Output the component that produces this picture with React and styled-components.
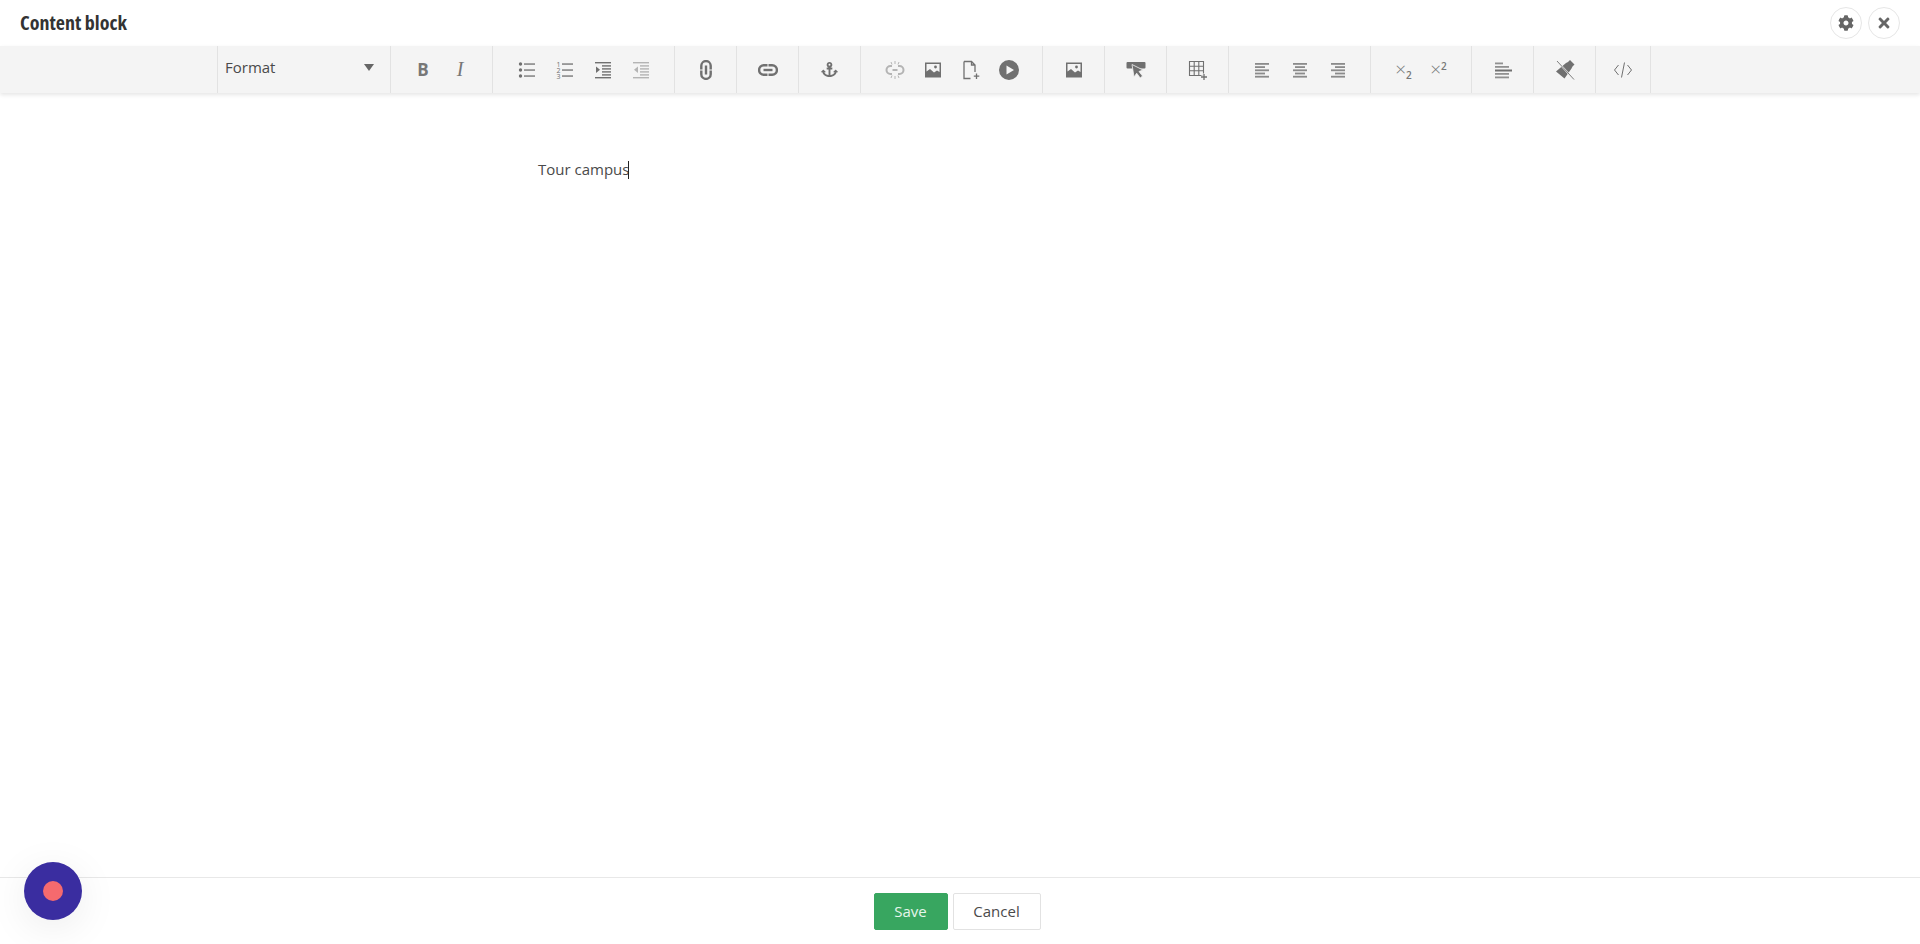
import React from 'react';
import styled, { createGlobalStyle } from 'styled-components';
import { FaAnchor, FaCog, FaTimes } from 'react-icons/fa';

const Global = createGlobalStyle`
  html, body, #root { margin: 0; padding: 0; height: 100%; }
  body {
    background: #fff;
    color: #4a4a4a;
    font-family: "Open Sans", "Liberation Sans", sans-serif;
    overflow: hidden;
  }
`;

const Page = styled.div`
  display: flex;
  flex-direction: column;
  height: 100vh;
`;

const Header = styled.header`
  display: flex;
  align-items: center;
  justify-content: space-between;
  height: 46px;
  padding: 0 20px;
  flex-shrink: 0;
`;

const Title = styled.h1`
  margin: 0 0 2px;
  font-size: 20px;
  font-weight: 700;
  font-stretch: 75%;
  color: #333;
`;

const HeaderActions = styled.div`
  display: flex;
  gap: 6px;
`;

const RoundButton = styled.button`
  display: flex;
  align-items: center;
  justify-content: center;
  width: 32px;
  height: 32px;
  padding: 0;
  background: #fff;
  border: 1px solid #e6e6e6;
  border-radius: 50%;
  color: #666;
  font-size: 16px;
`;

const Toolbar = styled.div`
  display: flex;
  height: 47px;
  padding-left: 217px;
  flex-shrink: 0;
  background: #f4f4f4;
  box-shadow: 0 2px 4px rgba(0, 0, 0, 0.1);
`;

const FormatSelect = styled.div`
  display: flex;
  align-items: center;
  justify-content: space-between;
  width: 174px;
  box-sizing: border-box;
  padding: 0 16px 5px 7px;
  border-left: 1px solid #e2e2e2;
  border-right: 1px solid #e2e2e2;
  font-size: 15px;
  color: #4a4a4a;
`;

const Caret = styled.span`
  width: 0;
  height: 0;
  border-left: 5px solid transparent;
  border-right: 5px solid transparent;
  border-top: 7px solid #666;
`;

const Group = styled.div`
  display: flex;
  align-items: center;
  justify-content: center;
  width: ${p => p.$w}px;
  box-sizing: border-box;
  border-right: 1px solid #e2e2e2;
`;

const ToolButton = styled.button`
  display: flex;
  align-items: center;
  justify-content: center;
  width: ${p => p.$size}px;
  height: 100%;
  padding: 0;
  background: none;
  border: 0;
  color: ${p => (p.$off ? '#b4b4b4' : '#707070')};
`;

const BoldGlyph = styled.span`
  font-family: "Open Sans", sans-serif;
  font-weight: 700;
  font-size: 17px;
  color: #777;
`;

const ItalicGlyph = styled.span`
  font-family: "Liberation Serif", serif;
  font-style: italic;
  font-size: 20px;
  color: #777;
`;

const ScriptGlyph = styled.span`
  font-family: "Open Sans", sans-serif;
  font-size: 19px;
  font-weight: 300;
  line-height: 1;
  color: #777;
  sub, sup { font-size: 10px; font-weight: 600; line-height: 0; }
  sub { vertical-align: -3px; }
  sup { vertical-align: 6px; }
`;

const Editor = styled.main`
  flex: 1;
  width: 844px;
  margin: 0 auto;
  padding-top: 65px;
  font-size: 15px;
  line-height: 22px;
  color: #4a4a4a;
`;

const TextCaret = styled.span`
  display: inline-block;
  width: 1px;
  height: 18px;
  margin-left: -1px;
  background: #222;
  vertical-align: -4px;
`;

const Footer = styled.footer`
  display: flex;
  align-items: center;
  justify-content: center;
  gap: 5px;
  height: 67px;
  padding-right: 6px;
  flex-shrink: 0;
  box-sizing: border-box;
  border-top: 1px solid #e8e8e8;
`;

const Button = styled.button`
  height: 37px;
  padding: 0;
  width: ${p => p.$w}px;
  border-radius: 2px;
  font-family: inherit;
  font-size: 15px;
  background: ${p => (p.$primary ? '#38a660' : '#fff')};
  color: ${p => (p.$primary ? '#e6f6ec' : '#4a4a4a')};
  border: 1px solid ${p => (p.$primary ? '#38a660' : '#e2e2e2')};
`;

const Recorder = styled.div`
  position: fixed;
  left: 24px;
  bottom: 24px;
  display: flex;
  align-items: center;
  justify-content: center;
  width: 58px;
  height: 58px;
  border-radius: 50%;
  background: #3a2da0;
  box-shadow: 0 8px 40px rgba(0, 0, 0, 0.08);
`;

const RecorderDot = styled.span`
  width: 20px;
  height: 20px;
  border-radius: 50%;
  background: #f56a6e;
`;

const Svg = ({ children }) => (
  <svg width="20" height="20" viewBox="0 0 20 20" fill="currentColor">{children}</svg>
);

const Lines = ({ rows }) => (
  <Svg>
    {rows.map(([x, y, w, h = 1.8, o = 0.8], i) => (
      <rect key={i} x={x} y={y} width={w} height={h} opacity={o} />
    ))}
  </Svg>
);

const BulletList = () => (
  <Svg>
    <circle cx="3.5" cy="4" r="1.7" />
    <circle cx="3.5" cy="10" r="1.7" />
    <circle cx="3.5" cy="16" r="1.7" />
    <rect x="7" y="3.4" width="11" height="1.3" />
    <rect x="7" y="9.4" width="11" height="1.3" />
    <rect x="7" y="15.4" width="11" height="1.3" />
  </Svg>
);

const NumberList = () => (
  <Svg>
    <text x="1.5" y="6.5" fontSize="7" fontFamily="Open Sans">1</text>
    <text x="1.5" y="12.5" fontSize="7" fontFamily="Open Sans">2</text>
    <text x="1.5" y="18.5" fontSize="7" fontFamily="Open Sans">3</text>
    <rect x="7" y="3.4" width="11" height="1.3" />
    <rect x="7" y="9.4" width="11" height="1.3" />
    <rect x="7" y="15.4" width="11" height="1.3" />
  </Svg>
);

const Indent = ({ out }) => (
  <Svg>
    <rect x="2" y="2" width="16" height="1.4" />
    <rect x="9" y="5.2" width="9" height="1.4" />
    <rect x="9" y="8.2" width="9" height="1.4" />
    <rect x="9" y="11.2" width="9" height="1.4" />
    <rect x="9" y="14.2" width="9" height="1.4" />
    <rect x="2" y="17" width="16" height="1.4" />
    {out ? <path d="M7 6.5v6.5L3 9.7z" /> : <path d="M3 6.5v6.5l4-3.3z" />}
  </Svg>
);

const linkPaths = (
  <g fill="none" stroke="currentColor" strokeWidth="2.4">
    <path d="M9.500 5.300H5.800a4.700 4.700 0 0 0 0 9.400h3.700" />
    <path d="M10.500 5.300h3.700a4.700 4.700 0 0 1 0 9.400h-3.700" />
    <path d="M5.500 10h9" />
  </g>
);

const VerticalLink = () => (
  <Svg><g transform="rotate(90 10 10)">{linkPaths}</g></Svg>
);

const HorizontalLink = () => <Svg>{linkPaths}</Svg>;

const BrokenLink = () => (
  <Svg>
    <g fill="none" stroke="currentColor" strokeWidth="2">
      <path d="M7 6H5.500a4 4 0 0 0 0 8H7M13 6h1.500a4 4 0 0 1 0 8H13" />
      <path d="M7.500 10h5" />
    </g>
    <g stroke="currentColor" strokeWidth="1">
      <path d="M10 1v3M10 16v3M6 2l1 2.500M14 2l-1 2.500M6 18l1-2.500M14 18l-1-2.500" />
    </g>
  </Svg>
);

const ImageIcon = () => (
  <Svg>
    <path fillRule="evenodd" d="M2 2.500h16v15H2zM3.500 4v7.500l3.500-2.500 4 3.500 3-2 2.500 1.500V4z" />
    <circle cx="12.500" cy="7" r="1.400" />
  </Svg>
);

const FilePlus = () => (
  <Svg>
    <path d="M3 1.500h7.500L14 5v7M10.500 1.500V5H14M9.500 18.500H3V1.500" fill="none" stroke="currentColor" strokeWidth="1.300" />
    <path d="M15.500 13.500v5.500M12.800 16.200h5.500" stroke="currentColor" strokeWidth="1.300" />
  </Svg>
);

const PlayCircle = () => (
  <Svg>
    <path fillRule="evenodd" d="M10 0a10 10 0 1 1 0 20 10 10 0 0 1 0-20zM7.500 5.500v9L15 10z" />
  </Svg>
);

const CursorBar = () => (
  <Svg>
    <rect x="0.500" y="2" width="19" height="6.500" rx="1" />
    <path d="M6 4.500L17 10l-4 1.500 3.500 4.500-2.300 2-3.500-4.800L8 17z" stroke="#f4f4f4" strokeWidth="0.800" />
  </Svg>
);

const TablePlus = () => (
  <Svg>
    <g fill="none" stroke="currentColor" strokeWidth="1.100">
      <path d="M1.500 1.500h14v14h-14zM1.500 6.200h14M1.500 10.800h14M6.200 1.500v14M10.800 1.500v14" />
      <path d="M16 13.500v6.500M13 17h6" stroke="#f4f4f4" strokeWidth="3" />
      <path d="M16 14v6M13 17h6" strokeWidth="1.300" />
    </g>
  </Svg>
);

const paraLines = {
  left: [[3, 3, 14], [3, 6.200, 10], [3, 9.400, 14], [3, 12.600, 10], [3, 15.800, 14]],
  center: [[3, 3, 14], [5, 6.200, 10], [3, 9.400, 14], [5, 12.600, 10], [3, 15.800, 14]],
  right: [[3, 3, 14], [7, 6.200, 10], [3, 9.400, 14], [7, 12.600, 10], [3, 15.800, 14]],
  format: [[2, 2.500, 8, 1.800, 0.75], [2, 6, 14, 1.800, 0.75], [2, 9.500, 17, 2, 1], [2, 13, 14, 1.800, 0.75], [2, 16.500, 14, 1.800, 0.75]],
};

const ClearFormat = () => (
  <Svg>
    <path d="M11 3l2-1 2-2 4.500 4.500-2 2-1 2L9.500 18.500 1 11.500z" />
    <path d="M2 1L19 19.500" stroke="#f4f4f4" strokeWidth="1.800" />
    <path d="M2 1L19 19.500" stroke="currentColor" strokeWidth="0.900" />
  </Svg>
);

const CodeIcon = () => (
  <Svg>
    <path d="M5.500 5L1.500 10l4 5M14.500 5l4 5-4 5M11.500 2.500L8.500 17.500" fill="none" stroke="currentColor" strokeWidth="1" />
  </Svg>
);

const groups = [
  { w: 102, size: 37, items: [<BoldGlyph>B</BoldGlyph>, <ItalicGlyph>I</ItalicGlyph>] },
  { w: 182, items: [<BulletList />, <NumberList />, <Indent />, { off: true, icon: <Indent out /> }] },
  { w: 62, items: [<VerticalLink />] },
  { w: 62, items: [<HorizontalLink />] },
  { w: 62, items: [<FaAnchor size={17} />] },
  { w: 182, items: [{ off: true, icon: <BrokenLink /> }, <ImageIcon />, <FilePlus />, <PlayCircle />] },
  { w: 62, items: [<ImageIcon />] },
  { w: 62, items: [<CursorBar />] },
  { w: 62, items: [<TablePlus />] },
  { w: 142, items: [<Lines rows={paraLines.left} />, <Lines rows={paraLines.center} />, <Lines rows={paraLines.right} />] },
  { w: 101, size: 35, items: [
    <ScriptGlyph>×<sub>2</sub></ScriptGlyph>,
    <ScriptGlyph>×<sup>2</sup></ScriptGlyph>,
  ] },
  { w: 62, items: [<Lines rows={paraLines.format} />] },
  { w: 62, items: [<ClearFormat />] },
  { w: 55, items: [<CodeIcon />] },
];

export default function App() {
  return (
    <Page>
      <Global />
      <Header>
        <Title>Content block</Title>
        <HeaderActions>
          <RoundButton><FaCog /></RoundButton>
          <RoundButton><FaTimes /></RoundButton>
        </HeaderActions>
      </Header>
      <Toolbar>
        <FormatSelect>
          Format
          <Caret />
        </FormatSelect>
        {groups.map((g, i) => (
          <Group key={i} $w={g.w}>
            {g.items.map((item, j) => {
              const isObj = item && item.icon;
              return (
                <ToolButton key={j} $size={g.size || 38} $off={isObj && item.off}>
                  {isObj ? item.icon : item}
                </ToolButton>
              );
            })}
          </Group>
        ))}
      </Toolbar>
      <Editor>
        Tour campus<TextCaret />
      </Editor>
      <Footer>
        <Button $primary $w={74}>Save</Button>
        <Button $w={88}>Cancel</Button>
      </Footer>
      <Recorder><RecorderDot /></Recorder>
    </Page>
  );
}
